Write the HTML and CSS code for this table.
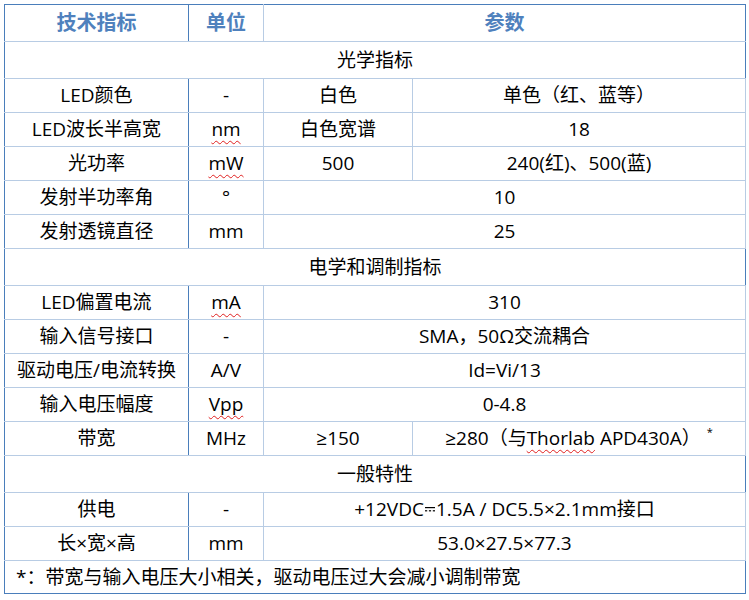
FILE: index.html
```html
<!DOCTYPE html>
<html lang="zh-CN">
<head>
<meta charset="utf-8">
<title>技术指标</title>
<link rel="stylesheet" href="styles.css">
</head>
<body>
<table class="spec">
  <colgroup><col class="c1"><col class="c2"><col class="c3"><col class="c4"></colgroup>
  <tr class="head"><th class="k first">技术指标</th><th>单位</th><th colspan="2" class="last">参数</th></tr>
  <tr class="sec"><td colspan="4">光学指标</td></tr>
  <tr><td class="k first">LED颜色</td><td>-</td><td>白色</td><td>单色（红、蓝等）</td></tr>
  <tr><td class="k first">LED波长半高宽</td><td><span class="sp">nm</span></td><td>白色宽谱</td><td>18</td></tr>
  <tr><td class="k first">光功率</td><td><span class="sp">mW</span></td><td>500</td><td>240(红)、500(蓝)</td></tr>
  <tr><td class="k first">发射半功率角</td><td>°</td><td colspan="2">10</td></tr>
  <tr><td class="k first">发射透镜直径</td><td>mm</td><td colspan="2">25</td></tr>
  <tr class="sec"><td colspan="4">电学和调制指标</td></tr>
  <tr><td class="k first">LED偏置电流</td><td><span class="sp">mA</span></td><td colspan="2">310</td></tr>
  <tr><td class="k first">输入信号接口</td><td>-</td><td colspan="2">SMA，50Ω交流耦合</td></tr>
  <tr><td class="k first">驱动电压/电流转换</td><td>A/V</td><td colspan="2">Id=Vi/13</td></tr>
  <tr><td class="k first">输入电压幅度</td><td><span class="sp">Vpp</span></td><td colspan="2">0-4.8</td></tr>
  <tr><td class="k first">带宽</td><td>MHz</td><td>≥150</td><td>≥280（与<span class="sp">Thorlab</span> APD430A）<sup class="ast">*</sup></td></tr>
  <tr class="sec"><td colspan="4">一般特性</td></tr>
  <tr><td class="k first">供电</td><td>-</td><td colspan="2">+12VDC<svg class="dc" width="10" height="5" viewBox="0 0 10 5"><rect x="0" y="0" width="10" height="1.2" fill="#000"/><rect x="0" y="3.2" width="2.2" height="1.2" fill="#000"/><rect x="3.9" y="3.2" width="2.2" height="1.2" fill="#000"/><rect x="7.8" y="3.2" width="2.2" height="1.2" fill="#000"/></svg>1.5A / DC5.5×2.1mm接口</td></tr>
  <tr><td class="k first">长×宽×高</td><td>mm</td><td colspan="2">53.0×27.5×77.3</td></tr>
  <tr class="note"><td colspan="4">*：带宽与输入电压大小相关，驱动电压过大会减小调制带宽</td></tr>
</table>
</body>
</html>
```
FILE: styles.css
```css
html, body {
  margin: 0;
  background: #ffffff;
}
body {
  padding: 4px;
  font-family: "Open Sans", "Noto Sans CJK SC", sans-serif;
  color: #000000;
}
.spec {
  border-collapse: collapse;
  table-layout: fixed;
  width: 741px;
  font-size: 19px;
}
.c1 { width: 184px; }
.c2 { width: 75px; }
.c3 { width: 149px; }
.c4 { width: 333px; }

.spec td, .spec th {
  border: 1px solid #b8cce4;
  padding: 0;
  height: 33px;
  text-align: center;
  vertical-align: middle;
  line-height: 1;
  white-space: nowrap;
}
.spec .k { border-right-color: #4a7ebb; }
.spec .first { border-left-color: #4a7ebb; }

.head th {
  height: 36px;
  border-top-color: #4a7ebb;
  color: #4f81bd;
  font-size: 20px;
  font-weight: bold;
}
.head .last { border-right-color: #4a7ebb; }

.sec td {
  height: 36px;
  border-left-color: #4a7ebb;
  border-right-color: #4a7ebb;
}

.note td {
  height: 32px;
  text-align: left;
  padding-left: 11px;
  border-left-color: #4a7ebb;
  border-right-color: #4a7ebb;
  border-bottom-color: #4a7ebb;
}

.sp {
  text-decoration: underline wavy #e02020;
  text-decoration-thickness: 1px;
  text-underline-offset: 4px;
  text-decoration-skip-ink: none;
}

.ast {
  font-size: 11px;
  vertical-align: 9px;
  margin-left: 6px;
  line-height: 0;
}

.dc {
  vertical-align: 4px;
  margin: 0 1px;
}
```
